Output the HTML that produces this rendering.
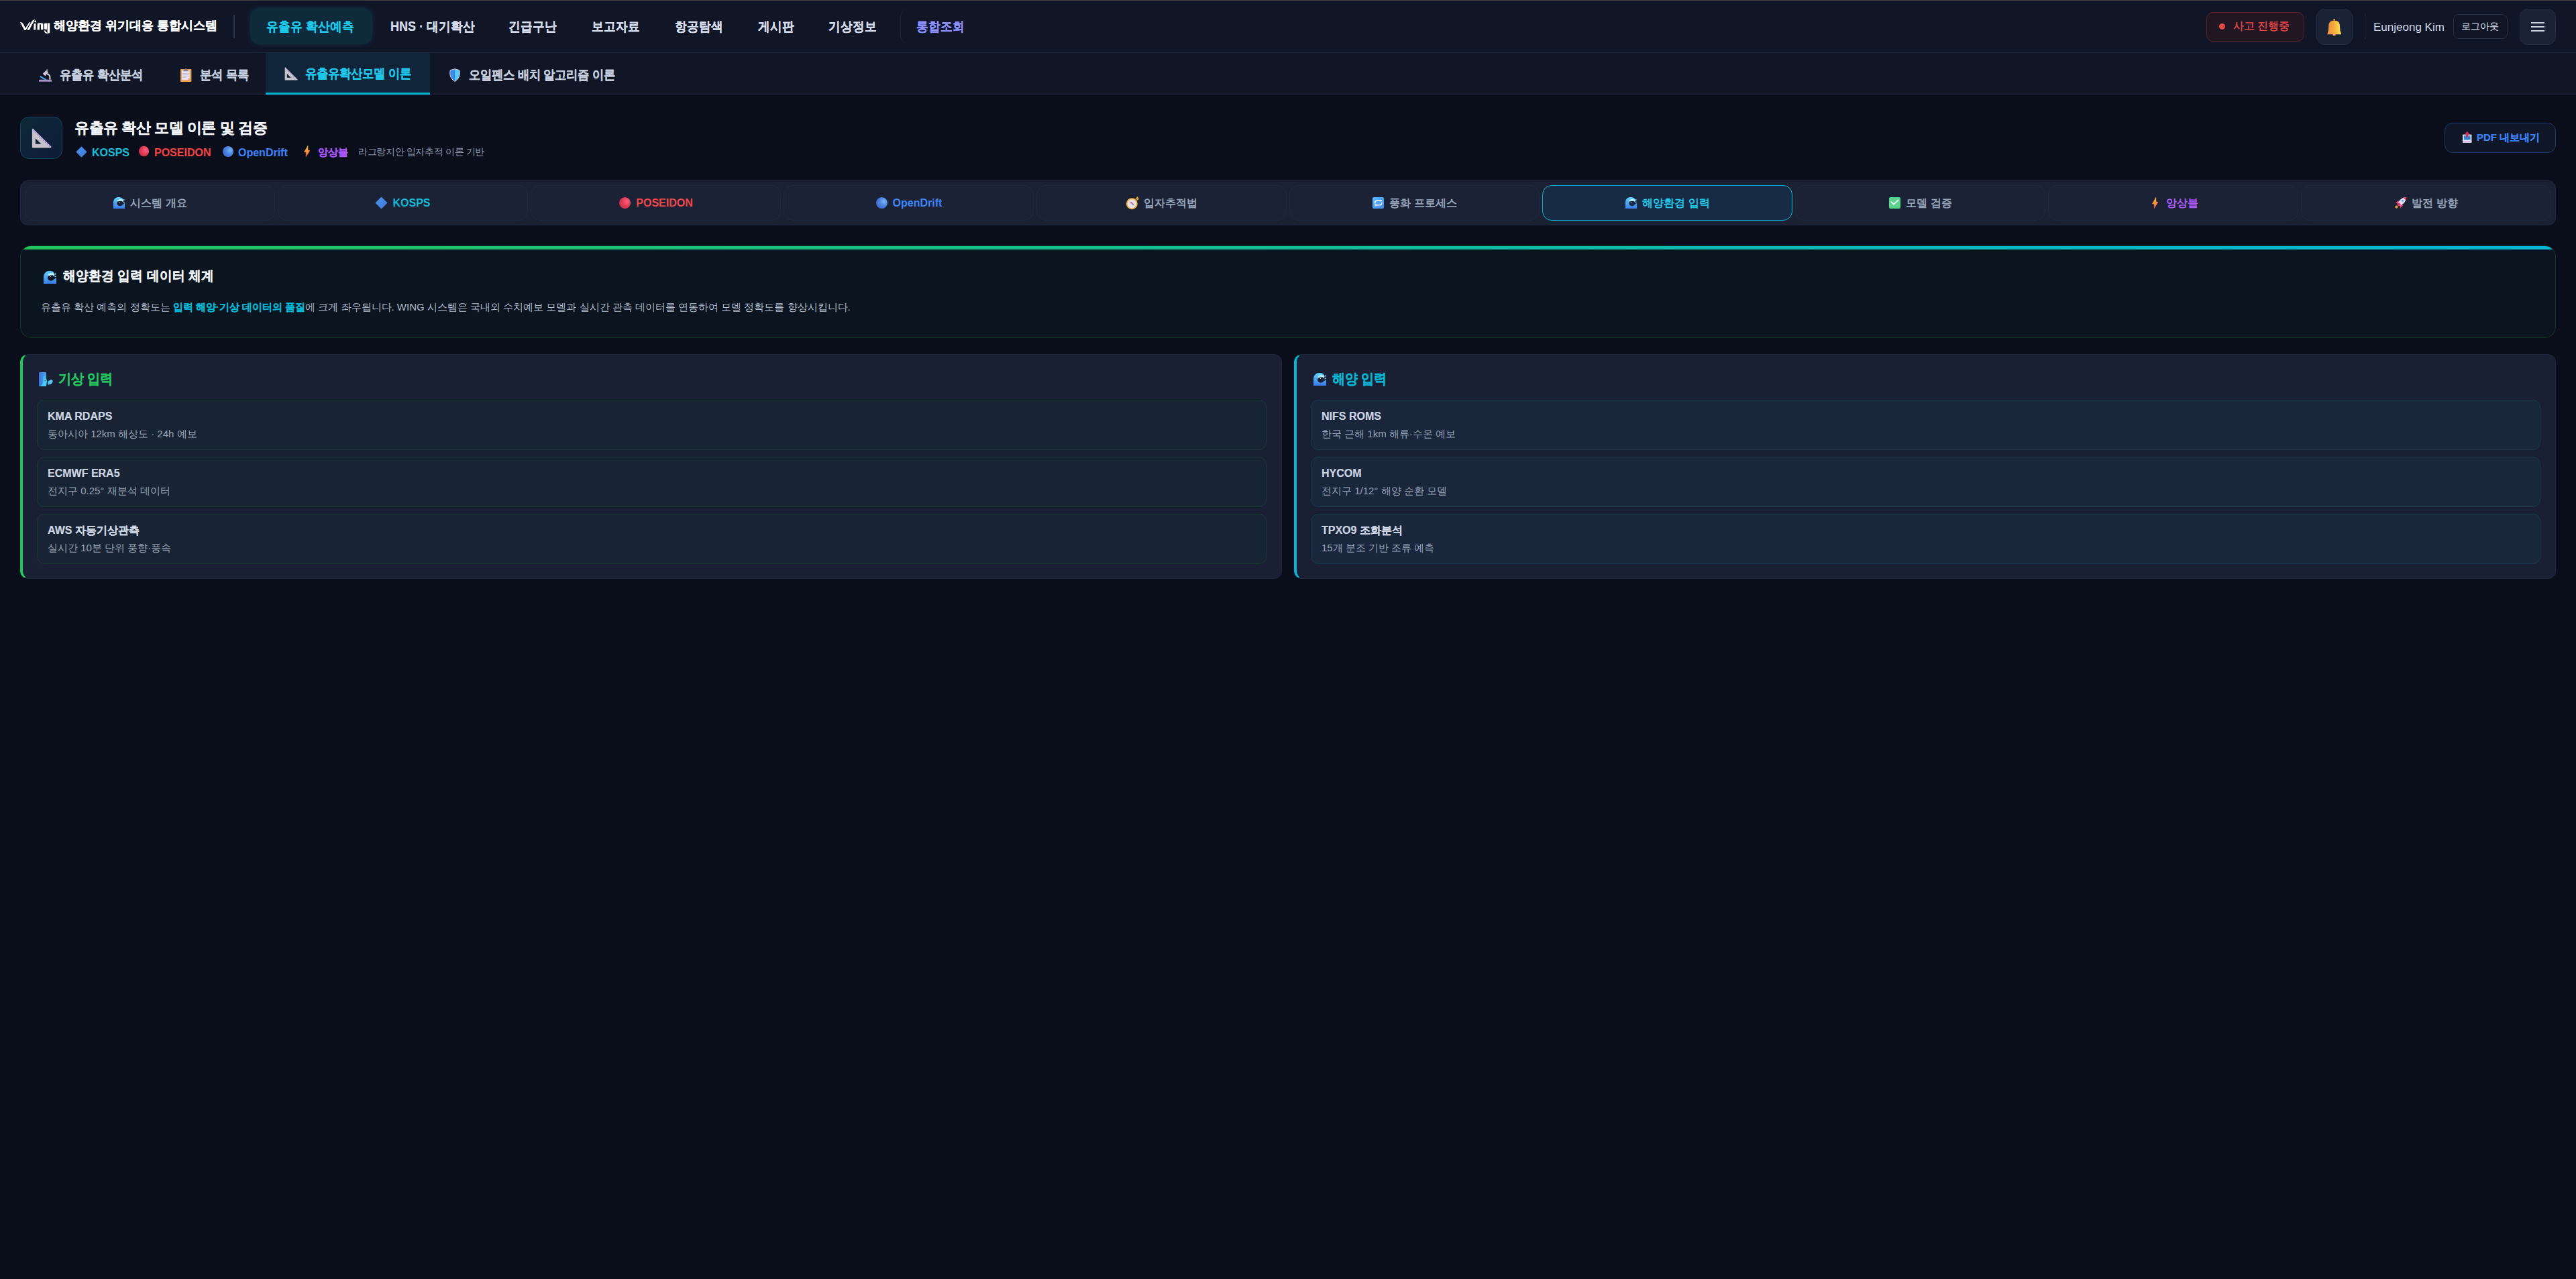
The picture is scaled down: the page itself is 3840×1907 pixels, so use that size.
<!DOCTYPE html>
<html lang="ko">
<head>
<meta charset="utf-8">
<title>WING 해양환경 위기대응 통합시스템</title>
<style>
*{box-sizing:border-box;margin:0;padding:0}
html,body{width:3840px;height:1907px;overflow:hidden}
body{background:#0a0e1a;font-family:"Liberation Sans",sans-serif;color:#e2e8f0;position:relative}
.abs{position:absolute}
.t{white-space:nowrap;line-height:1}
.b{font-weight:700;-webkit-text-stroke:0.2px currentColor}
.nav{font-size:18px;color:#d5dcea;transform:scaleY(1.08)}
.st{font-size:17px;color:#c6cfdf;transform:scaleY(1.1)}
.mt{flex:1;height:53px;border-radius:14px;background:#1b2235;border:1px solid #1e2a43;display:flex;align-items:center;justify-content:center;font-size:16px;color:#94a3b8;white-space:nowrap;line-height:1}
.mt svg{margin-right:7px;flex:none}
.mt.act{background:#182b44;border:1.5px solid #06b6d4;color:#22c8e8}
.panel{top:528px;width:1881px;height:335px;border-radius:12px;background:#1a2033;border:1px solid #1c2740;border-left:4px solid;padding:25px 22px 0 21px}
.ptitle{height:22px;display:flex;align-items:center;font-size:19px;line-height:1;margin-left:3px}
.ptitle svg{margin-right:8px;flex:none}
.ptitle span{display:inline-block;transform:translateY(-1px) scaleY(1.1)}
.item{margin-top:20px;height:75px;border-radius:11px;background:#182433;border:1px solid #1a3a32;padding:16px 15px 0 15px}
.item+.item{margin-top:10px}
.item.c{background:#19263b;border-color:#183a4e}
.it{font-size:16px;color:#cdd5e2;line-height:1}
.id{font-size:15px;color:#98a4b8;line-height:1;margin-top:10px}
</style>
</head>
<body>
<svg width="0" height="0" style="position:absolute">
<defs>
<linearGradient id="gWave" x1="0" y1="0" x2="0" y2="1"><stop offset="0" stop-color="#5fd0fd"/><stop offset="1" stop-color="#3b7ee8"/></linearGradient>
<radialGradient id="gRed" cx="0.68" cy="0.38" r="0.7"><stop offset="0" stop-color="#ff6486"/><stop offset="0.55" stop-color="#e23e55"/><stop offset="1" stop-color="#c92f4c"/></radialGradient>
<radialGradient id="gBlue" cx="0.68" cy="0.38" r="0.7"><stop offset="0" stop-color="#78b6f2"/><stop offset="0.55" stop-color="#4b82e0"/><stop offset="1" stop-color="#4168d2"/></radialGradient>
<linearGradient id="gDia" x1="0" y1="0" x2="1" y2="1"><stop offset="0" stop-color="#4a92ea"/><stop offset="1" stop-color="#4279dc"/></linearGradient>
<linearGradient id="gRep" x1="0" y1="0" x2="1" y2="1"><stop offset="0" stop-color="#5bbafb"/><stop offset="1" stop-color="#4a88e6"/></linearGradient>
<linearGradient id="gBolt" x1="0" y1="0" x2="0" y2="1"><stop offset="0" stop-color="#fcbc46"/><stop offset="0.6" stop-color="#f78a40"/><stop offset="1" stop-color="#f04e50"/></linearGradient>
<linearGradient id="gBell" x1="0" y1="0" x2="1" y2="0"><stop offset="0" stop-color="#f08a4a"/><stop offset="0.45" stop-color="#f2aa3a"/><stop offset="1" stop-color="#fee45a"/></linearGradient>
<linearGradient id="gShield" x1="0" y1="0" x2="1" y2="0"><stop offset="0.5" stop-color="#3a88e8"/><stop offset="0.5" stop-color="#56c8fc"/></linearGradient>
<linearGradient id="gWind" x1="0" y1="0" x2="1" y2="0"><stop offset="0" stop-color="#3c72d6"/><stop offset="1" stop-color="#4aa8ee"/></linearGradient>

<symbol id="iWave" viewBox="0 0 20 20">
 <path d="M1,19 V8.8 A7.8,7.8 0 0 1 8.8,1 H10.2 A7.2,7.2 0 0 1 16.2,4 V12.6 Q17.6,11.6 19,10.2 V19 Z" fill="url(#gWave)"/>
 <ellipse cx="11.4" cy="10.6" rx="4.8" ry="4.3" style="fill:var(--ibg)"/>
 <g fill="#bdeeff"><circle cx="8.4" cy="6.4" r="1.5"/><circle cx="10.6" cy="5.4" r="1.7"/><circle cx="13" cy="5.3" r="1.7"/><circle cx="15.2" cy="6.2" r="1.4"/><rect x="8" y="5.4" width="7.6" height="1.6"/></g>
 <circle cx="11" cy="9" r="0.6" fill="#cdf2ff"/>
 <circle cx="17.6" cy="5.2" r="0.95" fill="#a6e2fb"/><circle cx="17.6" cy="8.8" r="0.95" fill="#a6e2fb"/>
</symbol>
<symbol id="iDia" viewBox="0 0 20 20"><path d="M10,1.5 L18.5,10 L10,18.5 L1.5,10 Z" fill="url(#gDia)" stroke="url(#gDia)" stroke-width="1.5" stroke-linejoin="round"/></symbol>
<symbol id="iRed" viewBox="0 0 20 20"><circle cx="10" cy="10" r="9" fill="url(#gRed)"/></symbol>
<symbol id="iBlue" viewBox="0 0 20 20"><circle cx="10" cy="10" r="9" fill="url(#gBlue)"/></symbol>
<symbol id="iComp" viewBox="0 0 20 20">
 <circle cx="9.3" cy="10.7" r="7.6" fill="#e8e2f0" stroke="#f0ae30" stroke-width="1.8"/>
 <path d="M15,3.6 L17.6,1.2 L18.8,3.6 L16.4,5.4" fill="none" stroke="#f4b830" stroke-width="1.5"/>
 <path d="M5.6,7 L10.2,9.6 L9,11 Z" fill="#f0305a"/><path d="M9,11 L10.2,9.6 L13.4,14.6 Z" fill="#6a6670"/>
</symbol>
<symbol id="iRep" viewBox="0 0 20 20">
 <rect x="1" y="1" width="18" height="18" rx="2.2" fill="url(#gRep)"/>
 <path d="M4.8,11 V9.8 Q4.8,6.6 8,6.6 H14.4" fill="none" stroke="#fff" stroke-width="1.5"/><path d="M13.6,4.6 L16.2,6.6 L13.6,8.6 Z" fill="#fff"/>
 <path d="M15.4,9.2 V10.4 Q15.4,13.4 12.2,13.4 H5.8" fill="none" stroke="#fff" stroke-width="1.5"/><path d="M6.6,11.4 L4,13.4 L6.6,15.4 Z" fill="#fff"/>
</symbol>
<symbol id="iCheck" viewBox="0 0 20 20"><rect x="1" y="1" width="18" height="18" rx="2.2" fill="#58d48c"/><path d="M4.6,8.6 L8.4,12.2 L15.2,5.8" fill="none" stroke="#fff" stroke-width="1.8" stroke-linecap="round" stroke-linejoin="round"/></symbol>
<symbol id="iBolt" viewBox="0 0 20 20"><path d="M11.6,1.2 L11.6,8.4 L14.6,8.9 L8.6,18.8 L8.6,11.6 L5.6,11.4 Z" fill="url(#gBolt)" stroke="url(#gBolt)" stroke-width="0.5" stroke-linejoin="round"/></symbol>
<symbol id="iRocket" viewBox="0 0 20 20">
 <path d="M1.8,10.4 L6.4,6.4 L9.6,10.6 Z" fill="#f2346a"/><path d="M9.6,18.8 L13.6,14 L9.2,10.8 Z" fill="#f23a76"/>
 <circle cx="3.6" cy="16.4" r="2.2" fill="#f39a30"/>
 <ellipse cx="12" cy="8" rx="3.8" ry="8.6" transform="rotate(45 12 8)" fill="#ecdcee"/>
 <path d="M14.6,2.4 Q18.2,0.2 19.2,0.8 Q19.8,1.8 17.6,5.4 Z" fill="#f23052"/>
 <path d="M6,14 L4.8,12.8 Q5.6,10.6 7.4,9.4 L10.6,12.6 Q9.4,14.4 7.2,15.2 Z" fill="#f2306a"/>
 <circle cx="13.2" cy="6.8" r="1.7" fill="#58aef8"/>
</symbol>
<symbol id="iBell" viewBox="0 0 22 25">
 <circle cx="10.6" cy="1.4" r="1.3" fill="#f4a83a"/>
 <path d="M0.2,23.2 H21.2 Q20.6,20.6 19.4,17.4 L18.8,8.6 Q17.8,2.4 10.6,2.4 Q3.4,2.4 2.4,8.6 L1.8,17.4 Q0.8,20.6 0.2,23.2 Z" fill="url(#gBell)"/>
 <path d="M1.6,18.6 H19.6" stroke="#f6c040" stroke-width="0.6" opacity="0.6"/>
 <ellipse cx="10.6" cy="24" rx="2.4" ry="1.2" fill="#f4a070"/>
</symbol>
<symbol id="iMicro" viewBox="0 0 19 19">
 <rect x="0" y="15.8" width="19" height="3.4" rx="1" fill="#a898b6"/><rect x="0" y="18" width="19" height="1.2" fill="#7d5ea6"/>
 <path d="M2.6,11.3 L9.6,15.6" stroke="#3cb0f6" stroke-width="2" stroke-linecap="round"/>
 <path d="M12,7.4 A4.8,4.8 0 0 1 16.4,12.4 V15.8" fill="none" stroke="#d2cade" stroke-width="2.2"/>
 <path d="M6,6.8 L11,1.8 L14.2,5 L9.2,10 Z" fill="#c8c3cc"/><path d="M6,6.8 L7.2,5.6 L10.4,8.8 L9.2,10 Z" fill="#eacbf4"/>
 <circle cx="12.4" cy="1.6" r="1.4" fill="#8d8591"/>
</symbol>
<symbol id="iClip" viewBox="0 0 17 20">
 <rect x="0" y="0.9" width="16.4" height="19" rx="0.8" fill="#e9a05a"/>
 <path d="M2,3 H13.8 V14.2 L11,17.2 H2 Z" fill="#e9e4f4"/><path d="M11,17.2 L11,14.2 H13.8 Z" fill="#c9c2dc"/>
 <path d="M3.2,7.4 H12.8 M3.2,9.4 H12.8 M3.2,11.4 H12.8 M3.2,13.4 H8.6" stroke="#bcb3c8" stroke-width="0.9"/>
 <rect x="4.4" y="1.6" width="7" height="2.6" rx="0.6" fill="#898191"/><circle cx="7.9" cy="1" r="0.9" fill="#898191"/>
</symbol>
<symbol id="iRuler" viewBox="0 0 20 20">
 <path d="M0.6,1.2 Q0.6,0.3 1.6,0.6 L19.6,18.4 Q20,19.6 18.8,19.6 L1.2,19.6 Q0.6,19.6 0.6,19 Z" fill="#c6c2ca"/>
 <path d="M3.9,10.1 L3.9,15.8 L9.7,15.8 Z" style="fill:var(--ibg)"/>
 <g fill="#a476ea"><circle cx="2.6" cy="2.6" r="0.75"/><circle cx="4.5" cy="4.5" r="0.75"/><circle cx="6.4" cy="6.4" r="0.75"/><circle cx="8.3" cy="8.3" r="0.75"/><circle cx="10.2" cy="10.2" r="0.75"/><circle cx="12.1" cy="12.1" r="0.75"/><circle cx="14" cy="14" r="0.75"/><circle cx="15.9" cy="15.9" r="0.75"/><circle cx="17.8" cy="17.8" r="0.75"/></g>
</symbol>
<symbol id="iShield" viewBox="0 0 16 20">
 <path d="M8,0.8 L14.6,2.6 Q15.4,3 15.2,8.6 Q14.6,15.4 8,19.4 Q1.4,15.4 0.8,8.6 Q0.6,3 1.4,2.6 Z" fill="url(#gShield)" stroke="#d6d0de" stroke-width="1"/>
</symbol>
<symbol id="iWind" viewBox="0 0 21 21">
 <path d="M0,0 H9.8 Q11,0 11,1.4 V21 H0 Z" fill="url(#gWind)"/>
 <path d="M6.6,6 Q10.6,6.2 11,9.6 L12.4,13.8 Q11.4,14.6 11.6,16 L10.6,21 H2.6 Q6,17.6 6.6,13.4 Z" fill="#48cbfa"/>
 <circle cx="16.4" cy="15.2" r="3" fill="#4cc2f0"/><circle cx="18.2" cy="13.4" r="2.4" fill="#56d0f6"/><circle cx="14.6" cy="17" r="1.8" fill="#44b8ee"/>
 <path d="M8,8.6 H10" stroke="#2a78d8" stroke-width="0.8"/><path d="M8.4,12.4 H10.6" stroke="#5a3a30" stroke-width="0.8"/>
</symbol>
<symbol id="iOut" viewBox="0 0 14 17">
 <rect x="0" y="4.4" width="13.4" height="12.4" rx="0.8" fill="#ebe5f2"/>
 <path d="M1.8,6 H11.6 V12.6 H7.8 Q6.7,13.6 5.6,12.6 H1.8 Z" fill="#2f88dc"/>
 <rect x="0" y="14" width="13.4" height="2.8" fill="#d8c2ea"/>
 <path d="M6.7,0 L10.2,3.6 L8.2,3.6 L8.2,8.8 L5.2,8.8 L5.2,3.6 L3.2,3.6 Z" fill="#e22a52"/>
</symbol>
</defs>
</svg>

<div class="abs" style="left:0;top:0;width:3840px;height:1px;background:#44423f"></div>
<div class="abs" style="left:0;top:1px;width:3840px;height:1px;background:#0c1121"></div>
<div class="abs" style="left:0;top:2px;width:3840px;height:140px;background:#101626"></div>
<div class="abs" style="left:0;top:78px;width:3840px;height:1px;background:#1c2741"></div>
<div class="abs" style="left:0;top:141px;width:3840px;height:1px;background:#1c2741"></div>

<!-- logo -->
<svg class="abs" style="left:26px;top:24px" width="54" height="30" viewBox="0 0 54 30" fill="#fff">
<path d="M4,9 Q7,8.5 9,12 L13.2,20.8 L10.2,20.8 Z"/>
<path d="M10.2,20.8 L12.6,20.8 L19.5,9.3 L17.6,9.3 Z"/>
<path d="M14.2,20.8 L17.6,20.8 Q22,12 26,5.2 Q23.5,5 22,7 Z"/>
<path d="M24.6,11 L27.4,11 L27.2,20.5 L24.2,20.5 Z"/><circle cx="26.8" cy="8" r="1.4"/>
<path d="M29.6,20.5 L29.8,10.8 Q34,9.6 38.2,11 L38.3,20.2 L35,20.2 L34.9,12.6 Q33.9,11.9 33,12.6 L33,20.5 Z"/>
<path d="M39.6,12 Q40,10.6 44,10.6 L44,20 Q40.4,20.2 39.6,18.8 Z"/>
<path d="M44.6,10.6 L48.2,10.6 L48.2,24.6 Q47.6,26 44.6,26 Z"/>
<path d="M39.6,21.2 Q40,26 44.6,26 L44.6,24.4 Q42,24.2 41.4,21.6 Z"/>
</svg>
<div class="abs t b" style="left:80px;top:29px;font-size:18px;color:#fff">해양환경 위기대응 통합시스템</div>
<div class="abs" style="left:348px;top:22px;width:2px;height:35px;background:#263353"></div>

<!-- nav -->
<div class="abs" style="left:373px;top:12px;width:182px;height:54px;border-radius:14px;background:#0f2a3b;box-shadow:0 0 6px 1px rgba(14,60,80,0.55)"></div>
<div class="abs t b nav" style="left:397px;top:31px;color:#1fc6e8">유출유 확산예측</div>
<div class="abs t b nav" style="left:582px;top:31px">HNS · 대기확산</div>
<div class="abs t b nav" style="left:758px;top:31px">긴급구난</div>
<div class="abs t b nav" style="left:882px;top:31px">보고자료</div>
<div class="abs t b nav" style="left:1006px;top:31px">항공탐색</div>
<div class="abs t b nav" style="left:1130px;top:31px">게시판</div>
<div class="abs t b nav" style="left:1235px;top:31px">기상정보</div>
<div class="abs" style="left:1342px;top:13px;width:40px;height:52px;border-left:1px solid #1c2741;border-radius:12px 0 0 12px"></div>
<div class="abs t b nav" style="left:1366px;top:31px;color:#8a8ff8">통합조회</div>

<!-- header right -->
<div class="abs" style="left:3289px;top:18px;width:146px;height:44px;border-radius:10px;background:#221622;border:1px solid #57232e"></div>
<div class="abs" style="left:3308px;top:35px;width:9px;height:9px;border-radius:50%;background:#e04848"></div>
<div class="abs t" style="left:3329px;top:31px;font-size:16px;color:#e54a4a;-webkit-text-stroke:0.35px #e54a4a">사고 진행중</div>
<div class="abs" style="left:3453px;top:13px;width:54px;height:54px;border-radius:12px;background:#1a2236;border:1px solid #212d47"></div>
<svg class="abs" style="left:3469px;top:28px" width="22" height="25"><use href="#iBell"/></svg>
<div class="abs" style="left:3525px;top:21px;width:1px;height:37px;background:#1f2a42"></div>
<div class="abs t" style="left:3538px;top:32px;font-size:17px;color:#d0d8e6">Eunjeong Kim</div>
<div class="abs" style="left:3657px;top:21px;width:81px;height:37px;border-radius:8px;border:1px solid #222e47"></div>
<div class="abs t" style="left:3669px;top:32px;font-size:14px;color:#c8d0de;-webkit-text-stroke:0.2px #c8d0de">로그아웃</div>
<div class="abs" style="left:3756px;top:13px;width:54px;height:54px;border-radius:12px;background:#1a2236;border:1px solid #212d47"></div>
<div class="abs" style="left:3773px;top:33px;width:20px;height:2px;background:#cfd6e2"></div>
<div class="abs" style="left:3773px;top:39px;width:20px;height:2px;background:#cfd6e2"></div>
<div class="abs" style="left:3773px;top:45px;width:20px;height:2px;background:#cfd6e2"></div>

<!-- sub tabs -->
<div class="abs" style="left:396px;top:79px;width:245px;height:62px;background:#10243a"></div>
<div class="abs" style="left:396px;top:138px;width:245px;height:3px;background:#06b6d4"></div>
<svg class="abs" style="left:58px;top:103px" width="19" height="19"><use href="#iMicro"/></svg>
<div class="abs t b st" style="left:89px;top:103px">유출유 확산분석</div>
<svg class="abs" style="left:269px;top:102px" width="17" height="20"><use href="#iClip"/></svg>
<div class="abs t b st" style="left:298px;top:103px">분석 목록</div>
<svg class="abs" style="left:424px;top:100px;--ibg:#10243a" width="20" height="20"><use href="#iRuler"/></svg>
<div class="abs t b st" style="left:455px;top:101px;color:#1fc6e8">유출유확산모델 이론</div>
<svg class="abs" style="left:670px;top:102px" width="16" height="20"><use href="#iShield"/></svg>
<div class="abs t b st" style="left:699px;top:103px">오일펜스 배치 알고리즘 이론</div>

<!-- page title -->
<div class="abs" style="left:30px;top:174px;width:63px;height:63px;border-radius:13px;background:linear-gradient(135deg,#0c2838,#0f1c38);border:1px solid #15485a"></div>
<svg class="abs" style="left:47px;top:191px;--ibg:#0e2036" width="30" height="30"><use href="#iRuler"/></svg>
<div class="abs t b" style="left:111px;top:180px;font-size:22px;color:#f1f5f9;letter-spacing:-0.44px">유출유 확산 모델 이론 및 검증</div>
<svg class="abs" style="left:113px;top:218px" width="17" height="17"><use href="#iDia"/></svg>
<div class="abs t b" style="left:137px;top:220px;font-size:16px;color:#19bcd4;-webkit-text-stroke:0.1px #19bcd4">KOSPS</div>
<svg class="abs" style="left:206px;top:217px" width="17" height="17"><use href="#iRed"/></svg>
<div class="abs t b" style="left:230px;top:220px;font-size:16px;color:#ef4444;-webkit-text-stroke:0.1px #ef4444">POSEIDON</div>
<svg class="abs" style="left:331px;top:217px" width="18" height="18"><use href="#iBlue"/></svg>
<div class="abs t b" style="left:355px;top:220px;font-size:16px;color:#3b82f6;-webkit-text-stroke:0.1px #3b82f6">OpenDrift</div>
<svg class="abs" style="left:448px;top:216px" width="19" height="19"><use href="#iBolt"/></svg>
<div class="abs t b" style="left:474px;top:219px;font-size:15px;color:#a855f7">앙상블</div>
<div class="abs t" style="left:534px;top:219px;font-size:14px;color:#8e9bb0;letter-spacing:-0.35px">라그랑지안 입자추적 이론 기반</div>

<div class="abs" style="left:3644px;top:183px;width:166px;height:45px;border-radius:12px;background:#0f1729;border:1px solid #1d3a6a"></div>
<svg class="abs" style="left:3671px;top:196px" width="14" height="17"><use href="#iOut"/></svg>
<div class="abs t b" style="left:3692px;top:197px;font-size:15px;color:#3b82f6">PDF 내보내기</div>

<!-- model tabs -->
<div class="abs" style="left:30px;top:269px;width:3780px;height:67px;border-radius:11px;background:#1a2133;border:1px solid #1d2842"></div>
<div class="abs" style="left:37px;top:276px;width:3766px;height:53px;display:flex;gap:4px;--ibg:#1a2134">
 <div class="mt"><svg width="19" height="19"><use href="#iWave"/></svg><span style="font-weight:700">시스템 개요</span></div>
 <div class="mt" style="color:#10bcd6"><svg width="19" height="19"><use href="#iDia"/></svg><span style="font-weight:700">KOSPS</span></div>
 <div class="mt" style="color:#f04848"><svg width="19" height="19"><use href="#iRed"/></svg><span style="font-weight:700">POSEIDON</span></div>
 <div class="mt" style="color:#3d86f8"><svg width="19" height="19"><use href="#iBlue"/></svg><span style="font-weight:700">OpenDrift</span></div>
 <div class="mt"><svg width="20" height="20"><use href="#iComp"/></svg><span style="font-weight:700">입자추적법</span></div>
 <div class="mt"><svg width="19" height="19"><use href="#iRep"/></svg><span style="font-weight:700">풍화 프로세스</span></div>
 <div class="mt act" style="--ibg:#182b44"><svg width="19" height="19"><use href="#iWave"/></svg><span style="font-weight:700">해양환경 입력</span></div>
 <div class="mt"><svg width="19" height="19"><use href="#iCheck"/></svg><span style="font-weight:700">모델 검증</span></div>
 <div class="mt" style="color:#ab5cf8"><svg width="19" height="19"><use href="#iBolt"/></svg><span style="font-weight:700">앙상블</span></div>
 <div class="mt"><svg width="19" height="19"><use href="#iRocket"/></svg><span style="font-weight:700">발전 방향</span></div>
</div>

<!-- info card -->
<div class="abs" style="left:30px;top:366px;width:3780px;height:138px;border-radius:16px;overflow:hidden;background:#0b151f;border:1px solid #123626">
 <div style="position:absolute;left:0;top:0;width:100%;height:5px;background:linear-gradient(90deg,#22c55e,#06b6d4)"></div>
</div>
<svg class="abs" style="left:64px;top:403px;--ibg:#0b151f" width="21" height="21"><use href="#iWave"/></svg>
<div class="abs t b" style="left:94px;top:402px;font-size:19px;color:#f1f5f9;transform:scaleY(1.07)">해양환경 입력 데이터 체계</div>
<div class="abs t" style="left:61px;top:450px;font-size:15px;color:#b0bbcc">유출유 확산 예측의 정확도는 <span class="b" style="color:#06b6d4">입력 해양·기상 데이터의 품질</span>에 크게 좌우됩니다. WING 시스템은 국내외 수치예보 모델과 실시간 관측 데이터를 연동하여 모델 정확도를 향상시킵니다.</div>

<!-- panels -->
<div class="abs panel" style="left:30px;border-left-color:#22c55e">
 <div class="ptitle b" style="color:#22c55e"><svg width="21" height="21"><use href="#iWind"/></svg><span>기상 입력</span></div>
 <div class="item"><div class="it b">KMA RDAPS</div><div class="id">동아시아 12km 해상도 · 24h 예보</div></div>
 <div class="item"><div class="it b">ECMWF ERA5</div><div class="id">전지구 0.25° 재분석 데이터</div></div>
 <div class="item"><div class="it b">AWS 자동기상관측</div><div class="id">실시간 10분 단위 풍향·풍속</div></div>
</div>
<div class="abs panel" style="left:1929px;border-left-color:#06b6d4;--ibg:#1a2033">
 <div class="ptitle b" style="color:#06b6d4"><svg width="21" height="21"><use href="#iWave"/></svg><span>해양 입력</span></div>
 <div class="item c"><div class="it b">NIFS ROMS</div><div class="id">한국 근해 1km 해류·수온 예보</div></div>
 <div class="item c"><div class="it b">HYCOM</div><div class="id">전지구 1/12° 해양 순환 모델</div></div>
 <div class="item c"><div class="it b">TPXO9 조화분석</div><div class="id">15개 분조 기반 조류 예측</div></div>
</div>
</body>
</html>
